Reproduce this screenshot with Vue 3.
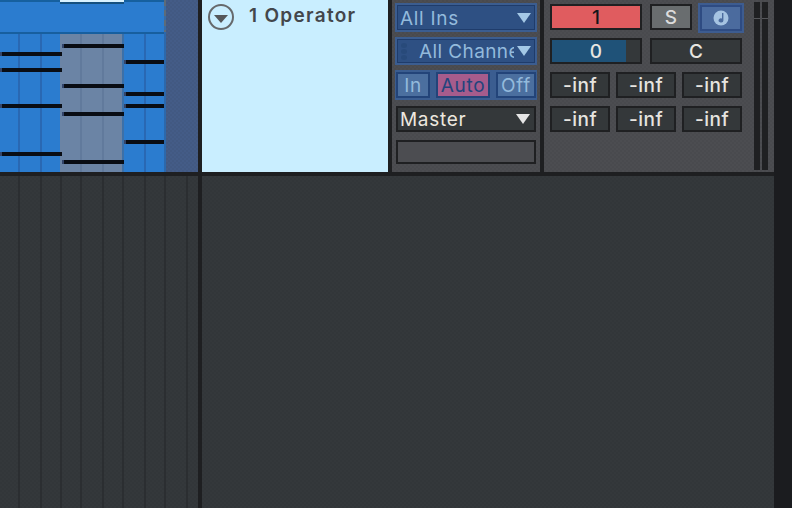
<template>
  <div class="app">
    <div class="main">
      <div class="top">
        <div class="arrangement">
          <div class="clip">
            <div class="clip-title">
              <span class="clip-select"></span>
            </div>
            <div class="roll">
              <div v-for="s in sections" :key="s.id" class="section" :class="s.kind">
                <i v-for="x in s.lines" :key="x" class="grid-line" :style="{ left: x + 'px' }"></i>
                <i
                  v-for="y in s.notes"
                  :key="y"
                  class="note"
                  :style="{ top: y + 'px', left: s.noteLeft + 'px', width: s.noteWidth + 'px' }"
                ></i>
              </div>
            </div>
          </div>
          <div class="clip-edge"></div>
          <div class="empty-slot dither"></div>
        </div>

        <div class="track-title">
          <svg class="fold" width="28" height="28" viewBox="0 0 28 28">
            <circle cx="14" cy="14" r="12" fill="none" stroke="#66696c" stroke-width="2" />
            <path d="M7 12h14l-7 8z" fill="#55575a" />
          </svg>
          <span class="track-name">1 Operator</span>
        </div>

        <div class="routing dither">
          <div class="blue-box">
            <span class="label">All Ins</span>
            <i class="arrow"></i>
          </div>
          <div class="blue-box channel">
            <span class="dots"><i></i><i></i><i></i></span>
            <span class="label clipped">All Channels</span>
            <i class="arrow"></i>
          </div>
          <div class="monitor">
            <button class="mon in">In</button>
            <button class="mon auto">Auto</button>
            <button class="mon off">Off</button>
          </div>
          <div class="dark-box">
            <span class="label">Master</span>
            <i class="arrow white"></i>
          </div>
          <div class="dark-box blank"></div>
        </div>

        <div class="mixer dither">
          <div class="controls">
            <div class="row first">
              <div class="cell volume"><span class="ink">1</span></div>
              <div class="cell solo">S</div>
              <div class="cue">
                <svg width="16" height="16" viewBox="0 0 16 16">
                  <circle cx="8" cy="8" r="7.5" fill="#a5c3e2" />
                  <path d="M9 3h1.4v7.4a2.4 2 0 1 1-1.4-1.8z" fill="#4b6b9e" />
                </svg>
              </div>
            </div>
            <div class="row">
              <div class="cell send">
                <i class="send-fill"></i>
                <span class="send-value">0</span>
              </div>
              <div class="cell pan">C</div>
            </div>
            <div v-for="r in 2" :key="r" class="row tight">
              <div v-for="c in 3" :key="c" class="cell inf">-inf</div>
            </div>
          </div>
          <div class="meters">
            <div class="meter"><i></i></div>
            <div class="meter"><i></i></div>
          </div>
        </div>
      </div>

      <div class="bottom">
        <div class="lane dither">
          <i v-for="x in laneLines" :key="x" class="lane-line" :style="{ left: x + 'px' }"></i>
        </div>
        <div class="lane-rest dither"></div>
      </div>
    </div>
    <div class="edge"></div>
  </div>
</template>

<script setup>
const sections = [
  { id: "a", kind: "blue", lines: [18, 40], notes: [18, 34, 70, 118], noteLeft: 0, noteWidth: 62 },
  { id: "b", kind: "grey", lines: [20, 42], notes: [10, 50, 78, 126], noteLeft: 2, noteWidth: 62 },
  { id: "c", kind: "blue last", lines: [20], notes: [26, 58, 70, 106], noteLeft: 0, noteWidth: 40 }
]

const laneLines = [18, 40, 60, 80, 102, 122, 144, 164, 186]
</script>

<style>
html,
body {
  margin: 0;
  background: #1c1d20;
}
</style>

<style scoped>
.app {
  width: 792px;
  height: 508px;
  display: flex;
  overflow: hidden;
  font-family: Inter, "Noto Sans", sans-serif;
  background: #1c1d20;
}

.main {
  width: 774px;
  display: flex;
  flex-direction: column;
}

.edge {
  flex: 1;
  background: #1b1c1f;
}

.top {
  height: 172px;
  display: flex;
  background: #1e1f21;
}

/* the app draws its panels with a faint checker */
.dither {
  background-image: repeating-conic-gradient(rgba(0, 0, 0, 0.035) 0 25%, transparent 0 50%);
  background-size: 4px 4px;
}

/* clip */
.arrangement {
  width: 198px;
  display: flex;
  flex-shrink: 0;
}

.clip {
  width: 164px;
  display: flex;
  flex-direction: column;
}

.clip-title {
  height: 32px;
  background: #2b7ccf;
  border-top: 2px solid #16609f;
  box-sizing: border-box;
  position: relative;
}

.clip-select {
  position: absolute;
  left: 60px;
  top: -2px;
  width: 64px;
  height: 2px;
  background: #d7f1ff;
  border-bottom: 2px solid #14507f;
}

.roll {
  flex: 1;
  display: flex;
  border-top: 2px solid #175f9f;
  position: relative;
}

.section {
  position: relative;
  width: 60px;
  background: #2b7ccf;
}

.section.grey {
  width: 62px;
  background: #6b84a5;
  border-right: 2px solid #3c70a8;
}

.section.last {
  width: 40px;
}

.grid-line {
  position: absolute;
  top: 0;
  bottom: 0;
  width: 2px;
  background: #2968b3;
}

.section.grey .grid-line {
  background: #617a9c;
}

.note {
  position: absolute;
  height: 4px;
  box-sizing: border-box;
  background: #090d14;
  border-left: 2px solid #33456a;
  z-index: 1;
}

.clip-edge {
  width: 2px;
  background:
    repeating-linear-gradient(#5d6b78 0 6px, #3a6ca3 6px 10px) top / 2px 32px no-repeat,
    #2c68ab;
}

.empty-slot {
  flex: 1;
  background-color: #445c87;
}

/* track title */
.track-title {
  width: 186px;
  margin-left: 4px;
  flex-shrink: 0;
  background: #c9eeff;
  position: relative;
}

.fold {
  position: absolute;
  left: 5px;
  top: 3px;
}

.track-name {
  position: absolute;
  left: 47px;
  top: 4px;
  font-size: 19px;
  line-height: 24px;
  font-weight: 600;
  letter-spacing: 1.3px;
  color: #43464b;
  white-space: nowrap;
}

/* routing */
.routing {
  width: 148px;
  margin-left: 4px;
  flex-shrink: 0;
  box-sizing: border-box;
  padding: 3px 3px 0 3px;
  background-color: #4c4d51;
  display: flex;
  flex-direction: column;
}

.blue-box {
  height: 29px;
  box-sizing: border-box;
  border: 2px solid #3b5d90;
  background: #2e5083;
  box-shadow: inset 0 0 0 1px #1f3c6b;
  margin-bottom: 5px;
  padding: 0 4px 0 3px;
  display: flex;
  align-items: center;
  justify-content: space-between;
  color: #93badc;
  position: relative;
}

.blue-box.channel {
  height: 28px;
}

.label {
  font-size: 19px;
  line-height: 24px;
  letter-spacing: 0.7px;
  white-space: nowrap;
  margin-top: 2px;
}

.channel {
  justify-content: flex-start;
}

.clipped {
  width: 98px;
  margin-left: 19px;
  overflow: hidden;
  letter-spacing: 0.4px;
}

.channel .arrow {
  margin-left: 3px;
}

.dots {
  position: absolute;
  left: 4px;
  top: 4px;
  display: flex;
  flex-direction: column;
  gap: 1px;
}

.dots i {
  width: 6px;
  height: 5px;
  border-radius: 50%;
  background: #284a7a;
}

.arrow {
  width: 0;
  height: 0;
  flex-shrink: 0;
  border-left: 7px solid transparent;
  border-right: 7px solid transparent;
  border-top: 10px solid #a4c8e6;
}

.arrow.white {
  border-top-color: #e6e6e6;
}

.monitor {
  height: 30px;
  box-sizing: border-box;
  background: #3b5d90;
  margin-bottom: 6px;
  padding: 2px 1px;
  display: flex;
  gap: 6px;
}

.mon {
  height: 26px;
  box-sizing: border-box;
  padding: 2px 0 0 0;
  border: 2px solid #234479;
  font-family: inherit;
  font-size: 19px;
  line-height: 20px;
  letter-spacing: 0.7px;
  background: #4b6f9f;
  color: #93badc;
}

.mon.in {
  width: 34px;
}

.mon.auto {
  width: 54px;
  background: #a65c8c;
  color: #23447c;
}

.mon.off {
  width: 40px;
}

.dark-box {
  width: 140px;
  height: 26px;
  margin: 0 0 8px 1px;
  box-sizing: border-box;
  border: 2px solid #1f2022;
  background: #34383a;
  color: #ece7df;
  padding: 0 4px 0 2px;
  display: flex;
  align-items: center;
  justify-content: space-between;
}

.dark-box.blank {
  background: #4c4d51;
}

/* mixer */
.mixer {
  width: 230px;
  margin-left: 4px;
  flex-shrink: 0;
  background-color: #4c4d51;
  display: flex;
}

.controls {
  width: 192px;
  margin-left: 6px;
  padding-top: 4px;
  display: flex;
  flex-direction: column;
  gap: 8px;
}

.row {
  display: flex;
  gap: 8px;
}

.row.first {
  height: 26px;
}

.row.tight {
  gap: 6px;
}

.cell {
  height: 26px;
  flex-shrink: 0;
  box-sizing: border-box;
  border: 2px solid #1f2022;
  background: #34383a;
  color: #e7e5e0;
  font-size: 19px;
  line-height: 24px;
  font-weight: 500;
  text-align: center;
}

.volume {
  width: 92px;
  background: #e05c5f;
}

.ink {
  color: #14161a;
}

.solo {
  width: 42px;
  background: #696d6f;
  color: #dcdcdc;
}

.cue {
  width: 46px;
  height: 30px;
  flex-shrink: 0;
  margin: -1px 0 0 -2px;
  box-sizing: border-box;
  background: #4b6b9e;
  border: 2px solid #3d5c90;
  box-shadow: inset 0 0 0 2px #2e4b82;
  display: flex;
  align-items: center;
  justify-content: center;
}

.send {
  width: 92px;
  position: relative;
}

.send-fill {
  position: absolute;
  left: 0;
  top: 0;
  bottom: 0;
  width: 74px;
  background: #1f5278;
}

.send-value {
  position: relative;
}

.pan {
  width: 92px;
}

.inf {
  width: 60px;
  letter-spacing: 0.5px;
}

.meters {
  margin-left: 12px;
  padding-top: 2px;
  display: flex;
  gap: 2px;
}

.meter {
  width: 6px;
  height: 168px;
  background: #1f2022;
  position: relative;
}

.meter i {
  position: absolute;
  left: 0;
  right: 0;
  top: 16px;
  height: 1px;
  background: #55565a;
}

/* bottom */
.bottom {
  flex: 1;
  display: flex;
  border-top: 4px solid #1e1f21;
}

.lane {
  width: 198px;
  position: relative;
  background-color: #34383b;
  border-right: 4px solid #1e1f21;
}

.lane-line {
  position: absolute;
  top: 0;
  bottom: 0;
  width: 2px;
  background: #2b2e31;
}

.lane-rest {
  flex: 1;
  background-color: #34383b;
}
</style>
